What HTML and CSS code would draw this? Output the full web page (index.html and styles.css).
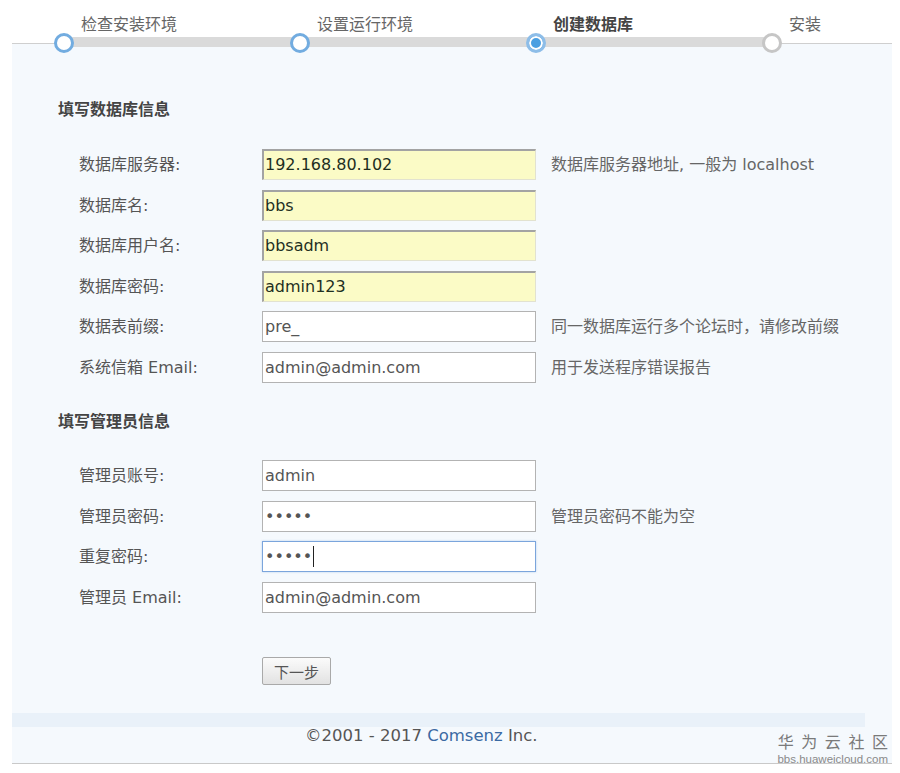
FILE: index.html
```html
<!DOCTYPE html>
<html lang="zh-CN">
<head>
<meta charset="utf-8">
<title>Discuz! 安装 - 创建数据库</title>
<link rel="stylesheet" href="styles.css">
</head>
<body>
<div class="page">
  <div class="steps">
    <div class="track"></div>
    <div class="step-row">
      <div class="step done"><span class="dot"></span><span class="step-label">检查安装环境</span></div>
      <div class="step done"><span class="dot"></span><span class="step-label">设置运行环境</span></div>
      <div class="step current"><span class="dot"></span><span class="step-label">创建数据库</span></div>
      <div class="step todo"><span class="dot"></span><span class="step-label">安装</span></div>
    </div>
  </div>

  <div class="panel">
    <h2 class="section-title">填写数据库信息</h2>
    <div class="form">
      <div class="label">数据库服务器:</div><div class="field hl">192.168.80.102</div><div class="hint">数据库服务器地址, 一般为 localhost</div>
      <div class="label">数据库名:</div><div class="field hl">bbs</div><div class="hint"></div>
      <div class="label">数据库用户名:</div><div class="field hl">bbsadm</div><div class="hint"></div>
      <div class="label">数据库密码:</div><div class="field hl">admin123</div><div class="hint"></div>
      <div class="label">数据表前缀:</div><div class="field">pre_</div><div class="hint">同一数据库运行多个论坛时，请修改前缀</div>
      <div class="label">系统信箱 Email:</div><div class="field">admin@admin.com</div><div class="hint">用于发送程序错误报告</div>
    </div>

    <h2 class="section-title second">填写管理员信息</h2>
    <div class="form admin">
      <div class="label">管理员账号:</div><div class="field">admin</div><div class="hint"></div>
      <div class="label">管理员密码:</div><div class="field pw">•••••</div><div class="hint">管理员密码不能为空</div>
      <div class="label">重复密码:</div><div class="field pw focus">•••••<span class="caret"></span></div><div class="hint"></div>
      <div class="label">管理员 Email:</div><div class="field">admin@admin.com</div><div class="hint"></div>
    </div>

    <div class="actions"><button class="btn" type="button">下一步</button></div>

    <div class="footer-band"></div>
    <div class="footer">©2001 - 2017 <span class="brand">Comsenz</span> Inc.</div>
  </div>

  <div class="watermark">
    <div class="wm-cn">华 为 云 社 区</div>
    <div class="wm-url">bbs.huaweicloud.com</div>
  </div>
</div>
</body>
</html>
```

FILE: styles.css
```css
html, body {
  margin: 0;
  padding: 0;
  background: #ffffff;
}

body {
  font-family: "DejaVu Sans", "Noto Sans CJK SC", sans-serif;
  font-size: 16px;
  color: #555;
}

.page {
  width: 880px;
  margin-left: 12px;
}

/* ---------- step bar ---------- */
.steps {
  position: relative;
  z-index: 1;
  display: grid;
  height: 43px;
  border-bottom: 1px solid #cfcfcf;
}

.track,
.step-row {
  grid-area: 1 / 1;
}

.track {
  align-self: start;
  margin-top: 37px;
  margin-left: 53px;
  width: 708px;
  height: 10px;
  background: #dadada;
}

.step-row {
  display: flex;
  padding-left: 42px;
}

.step {
  display: flex;
  align-items: flex-start;
  width: 236px;
}

.step:last-child {
  width: auto;
}

.dot {
  flex: none;
  box-sizing: border-box;
  width: 20px;
  height: 20px;
  margin-top: 33px;
  border-radius: 50%;
  border: 3px solid #72ace0;
  background: #fff;
}

.step.current .dot {
  border-color: #8dbde8;
  background: #4b9fe1;
  box-shadow: inset 0 0 0 2px #fff;
}

.step.todo .dot {
  border-color: #c6c6c6;
}

.step-label {
  margin-left: 7px;
  margin-top: 15px;
  line-height: 20px;
  font-size: 16px;
  color: #666;
  white-space: nowrap;
}

.step.current .step-label {
  font-weight: bold;
  color: #444;
}

/* ---------- panel ---------- */
.panel {
  background: #f5f9fd;
  border-bottom: 1px solid #c9c9c9;
  padding-top: 56px;
  padding-bottom: 18px;
}

.section-title {
  margin: 0 0 0 46px;
  font-size: 16px;
  line-height: 20px;
  font-weight: bold;
  color: #444;
}

.section-title.second {
  margin-top: 29.5px;
}

.form {
  display: grid;
  grid-template-columns: 183px 274px 1fr;
  grid-auto-rows: 31px;
  row-gap: 9.5px;
  margin: 29px 0 0 67px;
}

.form.admin {
  margin-top: 28px;
}

.label {
  line-height: 31px;
  color: #555;
  white-space: nowrap;
}

.field {
  box-sizing: border-box;
  height: 31px;
  line-height: 29px;
  padding-left: 2px;
  background: #fff;
  border: 1px solid #b3b3b3;
  color: #555;
  white-space: nowrap;
  overflow: hidden;
}

.field.hl {
  background: #fbfbc6;
  border-top: 2px solid #a3a3a3;
  border-left: 2px solid #a3a3a3;
  border-right: 1px solid #e2e2d0;
  border-bottom: 1px solid #e2e2d0;
  padding-left: 1px;
  line-height: 28px;
  color: #1f2f1f;
}

.field.pw {
  color: #555;
}

.field.focus {
  border-color: #7ba5dc;
  box-shadow: 0 0 2px rgba(110, 160, 220, 0.45);
}

.caret {
  display: inline-block;
  width: 1px;
  height: 21px;
  vertical-align: -5px;
  background: #222;
  margin-left: 1px;
}

.hint {
  padding-left: 15px;
  line-height: 31px;
  color: #666;
  font-size: 16px;
  white-space: nowrap;
}

.actions {
  margin: 44.5px 0 0 250px;
}

.btn {
  display: block;
  box-sizing: border-box;
  width: 69px;
  height: 28px;
  padding: 0;
  font-family: "DejaVu Sans", "Noto Sans CJK SC", sans-serif;
  font-size: 15px;
  color: #555;
  background: linear-gradient(#fbfbfb, #e2e2e2);
  border: 1px solid #a9a9a9;
  border-radius: 2px;
}

.footer-band {
  margin-top: 28px;
  width: 853px;
  height: 14px;
  background: #e9f1f9;
}

.footer {
  padding-left: 293px;
  line-height: 18px;
  color: #555;
  font-size: 16.5px;
}

.brand {
  color: #3b6aa3;
}

/* ---------- watermark ---------- */
.watermark {
  position: absolute;
  left: 777px;
  top: 731px;
  width: 111px;
  text-align: right;
  color: #7a7a7a;
}

.wm-cn {
  font-family: "Noto Sans CJK SC", sans-serif;
  font-size: 16px;
  line-height: 20px;
  letter-spacing: 2px;
  margin-right: -2px;
}

.wm-url {
  margin-top: 3px;
  font-family: "Liberation Sans", sans-serif;
  font-size: 11.5px;
  line-height: 11px;
  color: #8a8a8a;
}
```
